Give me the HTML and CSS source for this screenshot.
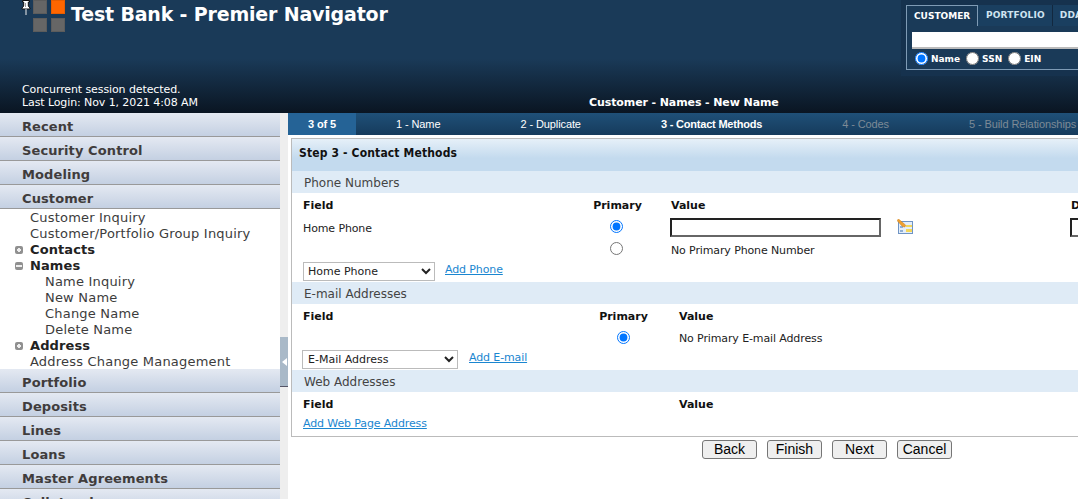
FILE: index.html
```html
<!DOCTYPE html>
<html lang="en">
<head>
    <meta charset="UTF-8">
    <title>Test Bank - Premier Navigator</title>
    <link rel="stylesheet" href="styles.css">
</head>
<body>
    <header class="top-bar">
        <div class="top-row">
            <div class="brand">
                <svg class="pin" width="10" height="15" viewBox="0 0 10 15">
                    <path d="M1.5 .5h7v1.500h-1.200v4l1.700 2v1h-8v-1l1.700-2v-4h-1.200z" fill="#fff" stroke="#111" stroke-width="1"/>
                    <path d="M4 3h1v4h-1z" fill="#999"/>
                    <path d="M5 9v6" stroke="#eee" stroke-width="1"/>
                </svg>
                <div class="logo">
                    <span></span><span class="logo-on"></span><span></span><span></span>
                </div>
                <div class="bank-name">Test Bank - Premier Navigator</div>
            </div>
            <div class="search">
                <div class="search-tabs">
                    <span class="search-tab search-tab-on">CUSTOMER</span>
                    <span class="search-tab search-tab-wide">PORTFOLIO</span>
                    <span class="search-tab">DDA</span>
                </div>
                <div class="search-body">
                    <input class="search-input" type="text">
                    <div class="search-kinds">
                        <label><input type="radio" name="kind" checked>Name</label>
                        <label><input type="radio" name="kind">SSN</label>
                        <label><input type="radio" name="kind">EIN</label>
                    </div>
                </div>
            </div>
        </div>
        <div class="bottom-row">
            <div class="session">Concurrent session detected.<br>Last Login: Nov 1, 2021 4:08 AM</div>
            <div class="page-title">Customer - Names - New Name</div>
        </div>
    </header>

    <div class="content">
        <nav class="sidebar">
            <div class="menu-head">Recent</div>
            <div class="menu-head">Security Control</div>
            <div class="menu-head">Modeling</div>
            <div class="menu-head">Customer</div>
            <ul class="tree">
                <li class="lvl1">Customer Inquiry</li>
                <li class="lvl1">Customer/Portfolio Group Inquiry</li>
                <li class="group"><span class="toggle toggle-plus"></span>Contacts</li>
                <li class="group"><span class="toggle toggle-minus"></span>Names</li>
                <li class="lvl2">Name Inquiry</li>
                <li class="lvl2">New Name</li>
                <li class="lvl2">Change Name</li>
                <li class="lvl2">Delete Name</li>
                <li class="group"><span class="toggle toggle-plus"></span>Address</li>
                <li class="lvl1">Address Change Management</li>
            </ul>
            <div class="menu-head">Portfolio</div>
            <div class="menu-head">Deposits</div>
            <div class="menu-head">Lines</div>
            <div class="menu-head">Loans</div>
            <div class="menu-head">Master Agreements</div>
            <div class="menu-head">Collateral</div>
        </nav>

        <div class="gutter">
            <div class="gutter-handle"><span class="gutter-arrow"></span></div>
        </div>

        <main class="main">
            <div class="steps">
                <div class="step step-count">3 of 5</div>
                <div class="step">1 - Name</div>
                <div class="step">2 - Duplicate</div>
                <div class="step step-on">3 - Contact Methods</div>
                <div class="step step-off">4 - Codes</div>
                <div class="step step-off">5 - Build Relationships</div>
            </div>

            <section class="panel">
                <h2 class="panel-title">Step 3 - Contact Methods</h2>

                <h3 class="group-title">Phone Numbers</h3>
                <div class="rows rows-phone">
                    <b>Field</b>
                    <b class="center">Primary</b>
                    <b>Value</b>
                    <b>Description</b>

                    <span>Home Phone</span>
                    <span class="center center-left"><input class="radio-top" type="radio" name="phone" checked></span>
                    <span class="value-cell">
                        <input class="box value-box" type="text">
                        <svg class="form-icon" width="16" height="16" viewBox="0 0 16 16">
                            <rect x="1.500" y="2.500" width="14" height="12" fill="#e4eefa" stroke="#6f94c4"/>
                            <rect x="9" y="6" width="6" height="2" fill="#f3d65a"/>
                            <rect x="9" y="10" width="6" height="3" fill="#f3d65a"/>
                            <path d="M3 8h3M3 12h3" stroke="#3a6fb0"/>
                            <path d="M0 1.500l1.500-1.500 7 6-.5 2-2.500-.5z" fill="#f0a030" stroke="#c87810" stroke-width=".5"/>
                        </svg>
                    </span>
                    <span class="value-cell"><input class="box desc-box" type="text"></span>

                    <span></span>
                    <span class="center center-left"><input class="radio-up" type="radio" name="phone"></span>
                    <span class="no-primary">No Primary Phone Number</span>
                    <span></span>

                    <div class="add-row">
                        <select class="pick pick-phone"><option>Home Phone</option></select>
                        <a href="#">Add Phone</a>
                    </div>
                </div>

                <h3 class="group-title">E-mail Addresses</h3>
                <div class="rows rows-email">
                    <b>Field</b>
                    <b class="center">Primary</b>
                    <b>Value</b>

                    <span></span>
                    <span class="center"><input class="radio-up" type="radio" name="email" checked></span>
                    <span>No Primary E-mail Address</span>

                    <div class="add-row add-row-email">
                        <select class="pick pick-email"><option>E-Mail Address</option></select>
                        <a href="#">Add E-mail</a>
                    </div>
                </div>

                <h3 class="group-title">Web Addresses</h3>
                <div class="rows rows-web">
                    <b>Field</b>
                    <span></span>
                    <b>Value</b>

                    <div class="add-row"><a class="add-web" href="#">Add Web Page Address</a></div>
                </div>
            </section>

            <div class="actions">
                <button type="button">Back</button>
                <button type="button">Finish</button>
                <button type="button">Next</button>
                <button type="button">Cancel</button>
            </div>
        </main>
    </div>
</body>
</html>
```

FILE: styles.css
```css
* {
    margin: 0;
    padding: 0;
    box-sizing: border-box;
}

html, body {
    height: 499px;
    overflow: hidden;
}

body {
    font-family: "DejaVu Sans", Verdana, sans-serif;
    font-size: 11px;
    color: #222;
    background: #fff;
}

/* header */
.top-bar {
    height: 113px;
    display: flex;
    flex-direction: column;
    justify-content: space-between;
    background: linear-gradient(#1a3a58 0, #1a3a58 52%, #0a1522 100%);
    color: #fff;
}

.top-row {
    display: flex;
    justify-content: space-between;
    align-items: flex-start;
}

.brand {
    display: flex;
    align-items: flex-start;
    padding-left: 21px;
}

.pin {
    margin-right: 2px;
}

.logo {
    display: grid;
    grid-template-columns: 14px 14px;
    grid-auto-rows: 14px;
    gap: 4px;
    margin-right: 6px;
}

.logo span {
    background: #666;
    border: 1px solid #5c5c5c;
}

.logo .logo-on {
    background: #ff6600;
    border-color: #e85d00;
}

.bank-name {
    font-size: 19px;
    font-weight: bold;
    line-height: 28px;
    letter-spacing: -.18px;
}

.search {
    width: 177px;
    height: 76px;
    padding: 5px 0 0 5px;
    background: #16324e;
    overflow: hidden;
}

.search-tabs {
    display: flex;
    height: 21px;
    margin-bottom: -1px;
    font-size: 9px;
    font-weight: bold;
    letter-spacing: .15px;
    color: #cfe3f0;
    white-space: nowrap;
}

.search-tab {
    flex-shrink: 0;
    padding: 5px 7px 0 7px;
    border-right: 1px solid #12283f;
    background: #1a3f60;
}

.search-tab-wide {
    padding-left: 8px;
}

.search-tab-on {
    width: 72px;
    background: #1a3a58;
    color: #fff;
    border: 1px solid #7f9bb5;
    border-bottom: none;
    letter-spacing: 0;
}

.search-body {
    height: 45px;
    padding: 6px 0 0 5px;
    background: #1a3a58;
    border: 1px solid #7f9bb5;
    border-right: none;
}

.search-input {
    display: block;
    width: 170px;
    height: 17px;
    border: none;
    border-bottom: 2px solid #bbb;
    background: #fff;
}

.search-kinds {
    display: flex;
    gap: 3px;
    margin-top: 3px;
    font-size: 9px;
    font-weight: bold;
}

.search-kinds label {
    display: flex;
    align-items: center;
}

.search-kinds input {
    margin: 0 3px 0 3px;
}

.bottom-row {
    display: flex;
    padding-bottom: 4px;
    line-height: 13px;
    letter-spacing: -.1px;
}

.session {
    width: 589px;
    padding-left: 22px;
}

.page-title {
    align-self: flex-end;
    font-weight: bold;
}

/* left menu */
.content {
    display: flex;
    height: 386px;
}

.sidebar {
    width: 280px;
    flex-shrink: 0;
    overflow: hidden;
}

.menu-head {
    height: 24px;
    padding-left: 22px;
    font-size: 13px;
    font-weight: bold;
    line-height: 28px;
    letter-spacing: .1px;
    color: #403c3c;
    background: linear-gradient(#e4e9f2, #c4d0e2);
    border-bottom: 1px solid #999;
}

.tree {
    list-style: none;
    margin-bottom: -1px;
    padding-top: 1px;
    font-size: 13px;
    line-height: 16px;
    letter-spacing: .2px;
    color: #3c3c3c;
}

.lvl1 {
    padding-left: 30px;
}

.lvl2 {
    padding-left: 45px;
}

.group {
    display: flex;
    align-items: center;
    padding-left: 15px;
    font-weight: bold;
    letter-spacing: .1px;
    color: #222;
}

.toggle {
    width: 8px;
    height: 8px;
    margin-right: 7px;
    border-radius: 2px;
    background-color: #909090;
    background-repeat: no-repeat;
    background-position: center;
}

.toggle-plus {
    background-image: linear-gradient(#eee, #eee), linear-gradient(#eee, #eee);
    background-size: 4px 2px, 2px 4px;
}

.toggle-minus {
    background-image: linear-gradient(#eee, #eee);
    background-size: 6px 2px;
}

.gutter {
    width: 8px;
    flex-shrink: 0;
    padding-top: 224px;
    background: #eee;
}

.gutter-handle {
    height: 50px;
    display: flex;
    align-items: center;
    justify-content: center;
    background: #a9b9c8;
    border-bottom: 1px solid #556;
}

.gutter-arrow {
    border-right: 5px solid #fff;
    border-top: 4px solid transparent;
    border-bottom: 4px solid transparent;
}

/* main form */
.main {
    width: 1078px;
    flex-shrink: 0;
}

.steps {
    display: flex;
    height: 22px;
    background: linear-gradient(#1f5078, #163b5c);
    font-family: "Liberation Sans", Arial, sans-serif;
    font-size: 11px;
    line-height: 22px;
    letter-spacing: -.1px;
    color: #fff;
    white-space: nowrap;
}

.step {
    padding: 0 40px;
}

.step-count {
    width: 68px;
    padding: 0;
    text-align: center;
    font-weight: bold;
    background: #256396;
}

.step-on {
    font-weight: bold;
    letter-spacing: -.2px;
}

.step-off {
    color: #7d8a96;
}

.panel {
    width: 1072px;
    margin: 3px 0 3px 3px;
    border: 1px solid #bbb;
}

.panel-title {
    height: 32px;
    padding-left: 7px;
    font-family: "DejaVu Sans Condensed", "DejaVu Sans", sans-serif;
    font-size: 12px;
    line-height: 28px;
    letter-spacing: .15px;
    color: #111;
    background: linear-gradient(#e6f0f8, #c3daee 60%);
}

.group-title {
    height: 22px;
    padding-left: 12px;
    font-size: 12px;
    font-weight: normal;
    line-height: 24px;
    color: #444;
    background: #dfebf6;
}

.rows {
    display: grid;
    align-items: center;
    padding-left: 11px;
    letter-spacing: -.12px;
}

.rows-phone {
    grid-template-columns: 291px 77px 400px 1fr;
    grid-template-rows: 25px 20px 22px 22px;
}

.rows-email {
    grid-template-columns: 297px 79px 1fr;
    grid-template-rows: 23px 22px 20px;
    padding-bottom: 1px;
}

.rows-web {
    grid-template-columns: 297px 79px 1fr;
    grid-template-rows: 23px 16px 5px;
}

.rows b {
    color: #111;
    letter-spacing: 0;
}

.rows-email b, .rows-web b {
    padding-top: 2px;
}

.center {
    width: 47px;
    display: flex;
    justify-content: center;
}

.center-left {
    margin-left: -1px;
}

.center input {
    margin: 0;
}

.center .radio-top {
    margin-top: -4px;
}

.center .radio-up {
    margin-top: -2px;
}

.value-cell {
    display: flex;
    align-items: center;
    gap: 16px;
    margin: -1px 0 0 -1px;
}

.form-icon {
    margin-top: -1px;
}

.box {
    display: block;
    height: 19px;
    border: 2px solid;
    border-color: #222 #666 #666 #222;
    background: #fff;
}

.value-box {
    width: 211px;
}

.desc-box {
    width: 60px;
}

.no-primary {
    margin-top: 3px;
}

.add-row {
    grid-column: 1 / -1;
    display: flex;
    align-items: flex-start;
    gap: 10px;
}

.add-row a {
    margin-top: 2px;
    color: #1a86d0;
}

.add-row .add-web {
    margin-top: 0;
}

.add-row-email {
    gap: 11px;
    margin-left: -1px;
}

.pick {
    height: 19px;
    margin-top: 1px;
    border: 1px solid #bbb;
    background: #fff;
    font-family: "DejaVu Sans", Verdana, sans-serif;
    font-size: 11px;
    color: #222;
}

.pick-phone {
    width: 132px;
}

.pick-email {
    width: 156px;
    padding-left: 1px;
}

.actions {
    display: flex;
    justify-content: center;
    gap: 10px;
}

.actions button {
    width: 55px;
    height: 19px;
    font-family: "Liberation Sans", Arial, sans-serif;
    font-size: 14px;
    line-height: 15px;
    background: #efefef;
    border: 1px solid #767676;
    border-radius: 3px;
    color: #000;
}
```
